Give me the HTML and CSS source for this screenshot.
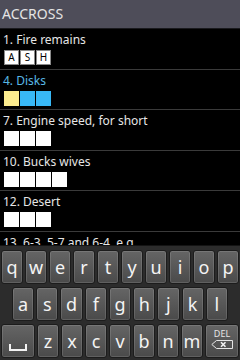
FILE: index.html
```html
<!DOCTYPE html>
<html>
<head>
<meta charset="utf-8">
<link rel="stylesheet" href="styles.css">
</head>
<body>
<div class="screen">
  <div class="header">ACCROSS</div>
  <div class="list">
    <div class="clue">
      <div class="label">1. Fire remains</div>
      <div class="cells"><span class="cell lettered">A</span><span class="cell lettered">S</span><span class="cell lettered">H</span></div>
    </div>
    <div class="clue active">
      <div class="label">4. Disks</div>
      <div class="cells"><span class="cell cursor"></span><span class="cell word"></span><span class="cell word"></span></div>
    </div>
    <div class="clue">
      <div class="label">7. Engine speed, for short</div>
      <div class="cells"><span class="cell"></span><span class="cell"></span><span class="cell"></span></div>
    </div>
    <div class="clue">
      <div class="label">10. Bucks wives</div>
      <div class="cells"><span class="cell"></span><span class="cell"></span><span class="cell"></span><span class="cell"></span></div>
    </div>
    <div class="clue">
      <div class="label">12. Desert</div>
      <div class="cells"><span class="cell"></span><span class="cell"></span><span class="cell"></span></div>
    </div>
    <div class="clue">
      <div class="label">13. 6-3, 5-7 and 6-4, e.g.</div>
      <div class="cells"><span class="cell"></span><span class="cell"></span><span class="cell"></span></div>
    </div>
  </div>
  <div class="keyboard">
    <div class="krow">
      <div class="key">q</div><div class="key">w</div><div class="key">e</div><div class="key">r</div><div class="key">t</div><div class="key">y</div><div class="key">u</div><div class="key">i</div><div class="key">o</div><div class="key">p</div>
    </div>
    <div class="krow mid">
      <div class="key">a</div><div class="key">s</div><div class="key">d</div><div class="key">f</div><div class="key">g</div><div class="key">h</div><div class="key">j</div><div class="key">k</div><div class="key">l</div>
    </div>
    <div class="krow">
      <div class="key wide space"><svg width="18" height="7" viewBox="0 0 18 7"><path d="M1 0 V6 H17 V0" fill="none" stroke="#f2f2f2" stroke-width="2"/></svg></div>
      <div class="key">z</div><div class="key">x</div><div class="key">c</div><div class="key">v</div><div class="key">b</div><div class="key">n</div><div class="key">m</div>
      <div class="key wide del"><span class="deltext">DEL</span><svg width="22" height="9" viewBox="0 0 22 9"><path d="M5.5 0.5 H21.5 V8.5 H5.5 L0.8 4.5 Z" fill="none" stroke="#e6e6e6" stroke-width="1"/><path d="M10 2.3 L14.5 6.7 M14.5 2.3 L10 6.7" stroke="#f2f2f2" stroke-width="1.6"/></svg></div>
    </div>
  </div>
</div>
</body>
</html>
```
FILE: styles.css
```css
html, body {
  margin: 0;
  padding: 0;
  background: #000;
}
.screen {
  width: 240px;
  height: 360px;
  display: flex;
  flex-direction: column;
  overflow: hidden;
  font-family: "Noto Sans", "Open Sans", sans-serif;
}
.header {
  flex: 0 0 auto;
  height: 28px;
  background: #4e4d59;
  border-bottom: 1px solid #1a1a1e;
  color: #e4e4e4;
  font-size: 14px;
  line-height: 28px;
  padding-left: 2px;
}
.list {
  flex: 1 1 auto;
  min-height: 0;
  overflow: hidden;
  background: #000;
}
.clue {
  padding: 4px 0 3.5px 3px;
  border-bottom: 1px solid #3a3a3a;
}
.label {
  font-size: 12px;
  line-height: 14px;
  color: #e6e6e6;
  white-space: nowrap;
}
.active .label {
  color: #58b8e6;
}
.cells {
  display: flex;
  gap: 1px;
  margin-top: 3px;
  padding-left: 1px;
}
.cell {
  width: 15px;
  height: 15px;
  background: #fff;
  color: #000;
  font-size: 10px;
  line-height: 15px;
  text-align: center;
}
.cell.lettered {
  box-shadow: inset 0 0 0 1px #8a8a8a;
}
.cell.cursor {
  background: #fcec8e;
}
.cell.word {
  background: #38b8f6;
}
.keyboard {
  flex: 0 0 115px;
  box-sizing: border-box;
  background: #2c2c2c;
  border-top: 1px solid #141414;
  padding: 4px 1px 2px;
  display: flex;
  flex-direction: column;
  gap: 3px;
}
.krow {
  display: flex;
  gap: 2px;
  height: 34px;
}
.krow.mid {
  padding: 0 11px;
}
.key {
  flex: 1 1 0;
  min-width: 0;
  box-sizing: border-box;
  border: 1px solid #1c1c1c;
  border-radius: 3px;
  background: linear-gradient(#656565, #4a4a4a);
  box-shadow: inset 0 0 0 1px rgba(255,255,255,0.12);
  color: #f4f4f4;
  font-size: 18px;
  display: flex;
  align-items: center;
  justify-content: center;
}
.key.wide {
  flex: 0 0 34px;
}
.key.space {
  align-items: flex-end;
  padding-bottom: 6px;
}
.key.del {
  flex-direction: column;
  justify-content: flex-start;
  padding-top: 4px;
  gap: 1px;
}
.deltext {
  font-size: 9px;
  line-height: 10px;
  color: #e6e6e6;
}
```
